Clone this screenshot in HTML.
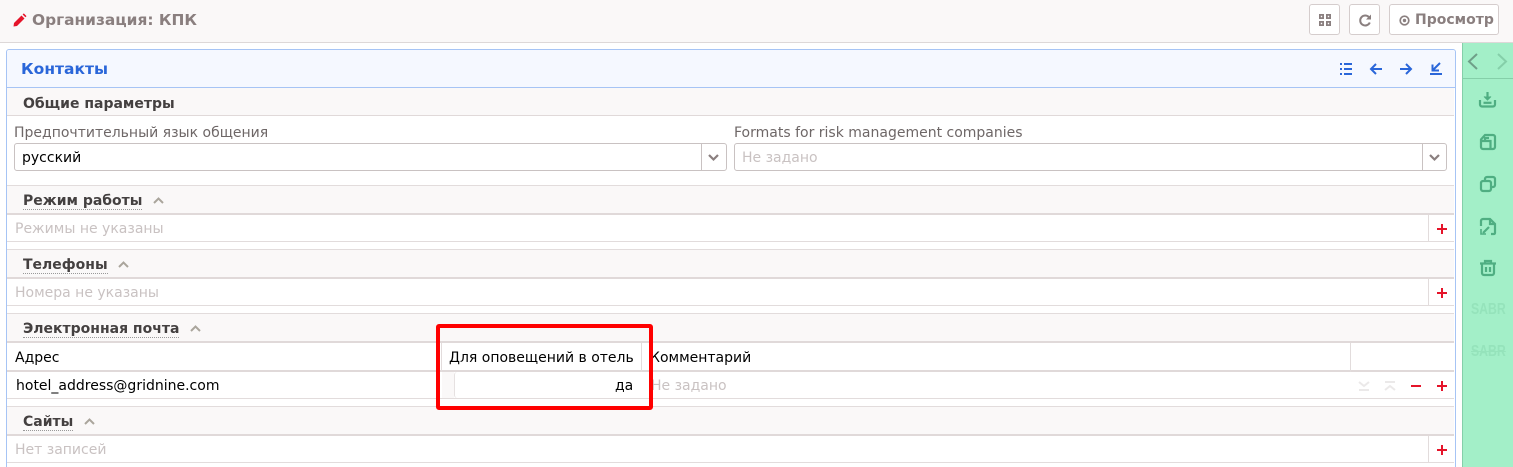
<!DOCTYPE html>
<html lang="ru"><head><meta charset="utf-8"><title>Организация: КПК</title>
<style>
html,body{margin:0;padding:0;width:1513px;height:467px;overflow:hidden;background:#fff}
body{position:relative;font-family:"DejaVu Sans","Liberation Sans",sans-serif;font-size:14px;color:#000}
.a{position:absolute;box-sizing:border-box}
.t{position:absolute;white-space:nowrap;line-height:16px}
.b{font-weight:700;color:#444040;font-size:14px}
.u{border-bottom:1px dotted #999}
.ph{color:#c9c2c2}
.sec{position:absolute;left:7px;width:1447px;background:#faf8f8;border-top:1px solid #e2dcdc;height:29px;border-bottom:2px solid #e0d9d9;box-sizing:border-box}
.row{position:absolute;left:7px;width:1447px;height:28px;background:#fff;border-bottom:1px solid #e2dcdc;box-sizing:border-box}
.v{position:absolute;width:1px;background:#e2dcdc}
.btn{position:absolute;top:4px;height:31px;background:#fff;border:1px solid #d5cdcd;border-radius:3px;box-sizing:border-box}
.inp{position:absolute;top:143px;height:28px;background:#fff;border:1px solid #c9c2c2;border-radius:3px;box-sizing:border-box}
.sabr{font-size:16px;font-weight:700;color:#95e3bb;font-family:'Liberation Sans',sans-serif;transform:scaleX(.766);transform-origin:left top}
svg{position:absolute;overflow:visible}
</style></head><body>

<!-- top bar -->
<div class="a" style="left:0;top:0;width:1513px;height:43px;background:#faf8f8;border-bottom:1px solid #ddd8d8"></div>
<svg style="left:13px;top:13px" width="14" height="14" viewBox="0 0 14 14"><path d="M.5 13.500 L1 10 L8.500 2.500 L11.500 5.500 L4 13Z" fill="#e5142a"/><path d="M9.600 1.500 L10.800 .4 L13.500 3.100 L12.400 4.300Z" fill="#e5142a"/></svg>
<div class="t" style="left:32px;top:12px;font-size:15.400px;font-weight:700;color:#8a7f7f">Организация: КПК</div>

<div class="btn" style="left:1309px;width:31px"></div>
<svg style="left:1319px;top:14px" width="12" height="12" viewBox="0 0 12 12" fill="#8a7f7f"><path d="M0 0h5v5H0zM1.800 1.800v1.400h1.400v-1.400zM7 0h5v5H7zM8.800 1.800v1.400h1.400v-1.400zM0 7h5v5H0zM1.800 8.800v1.400h1.400v-1.400zM7 7h5v5H7zM8.800 8.800v1.400h1.400v-1.400z" fill-rule="evenodd"/></svg>
<div class="btn" style="left:1349px;width:31px"></div>
<svg style="left:1359px;top:14px" width="13" height="13" viewBox="0 0 13 13" fill="none" stroke="#8a7f7f" stroke-width="2"><path d="M10.800 8.500A5 5 0 1 1 9.800 3"/><path d="M12 .5v5h-5z" fill="#8a7f7f" stroke="none"/></svg>
<div class="btn" style="left:1389px;width:110px"></div>
<svg style="left:1399px;top:15px" width="11" height="11" viewBox="0 0 11 11" fill="none" stroke="#8a7f7f" stroke-width="1.700"><circle cx="5.500" cy="5.500" r="4.300"/><circle cx="5.500" cy="5.500" r="1.700" fill="#8a7f7f" stroke="none"/></svg>
<div class="t" style="left:1415px;top:12px;font-size:14px;font-weight:700;color:#8a7f7f">Просмотр</div>

<!-- side bar -->
<div class="a" style="left:1462px;top:43px;width:51px;height:424px;background:#a3efc8;border-left:1px solid #85cfa9"></div>
<div class="a" style="left:1463px;top:78px;width:50px;height:1px;background:#85cfa9"></div>
<svg style="left:1467px;top:53px" width="11" height="17" viewBox="0 0 11 17" fill="none" stroke="#6f9f88" stroke-width="2"><path d="M10 1 L2 8.500 L10 16"/></svg>
<svg style="left:1497px;top:53px" width="11" height="17" viewBox="0 0 11 17" fill="none" stroke="#85cfa9" stroke-width="2"><path d="M1 1 L9 8.500 L1 16"/></svg>
<svg style="left:1479px;top:91px" width="17" height="17" viewBox="0 0 17 17" fill="none" stroke="#4fae82" stroke-width="2.200"><path d="M8.500 1v6"/><path d="M5 5.500 8.500 9 12 5.500" fill="#4fae82" stroke-width="1"/><path d="M1 9v4.500a2 2 0 0 0 2 2h11a2 2 0 0 0 2-2V9"/><path d="M4.500 11.800h8"/></svg>
<svg style="left:1480px;top:134px" width="16" height="16" viewBox="0 0 16 16" fill="none" stroke="#4fae82" stroke-width="2.200"><path d="M1 5.500 5 1h8a2 2 0 0 1 2 2v10a2 2 0 0 1-2 2H3a2 2 0 0 1-2-2z"/><path d="M1 7h9.500v8M5 7V4h4"/></svg>
<svg style="left:1480px;top:176px" width="16" height="16" viewBox="0 0 16 16" fill="none" stroke="#4fae82" stroke-width="2.200"><rect x="1" y="5" width="10" height="10" rx="2"/><path d="M5 4V3a2 2 0 0 1 2-2h6a2 2 0 0 1 2 2v6a2 2 0 0 1-2 2h-1"/></svg>
<svg style="left:1480px;top:218px" width="16" height="17" viewBox="0 0 16 17" fill="none" stroke="#4fae82" stroke-width="2.200"><path d="M1 8V3a2 2 0 0 1 2-2h7l5 5v9a1 1 0 0 1-1 1h-3"/><path d="M10 1v5h5"/><path d="M9 9 3 15"/><path d="M1 11v5h5" stroke-width="1.600"/></svg>
<svg style="left:1480px;top:260px" width="16" height="16" viewBox="0 0 16 16" fill="none" stroke="#4fae82" stroke-width="2.200"><path d="M0 3.500h16M5 3V1h6v2"/><path d="M2 4v9a2 2 0 0 0 2 2h8a2 2 0 0 0 2-2V4"/><path d="M6 7v5M10 7v5"/></svg>
<div class="t sabr" style="left:1471px;top:302px">SABR</div>
<div class="t sabr" style="left:1471px;top:344px;text-decoration:line-through">SABR</div>

<!-- main panel -->
<div class="a" style="left:6px;top:49px;width:1450px;height:430px;background:#fff;border:1px solid #a6c4f5;border-radius:3px 3px 0 0"></div>
<div class="a" style="left:7px;top:50px;width:1448px;height:38px;background:#f5f8ff;border-bottom:1px solid #a6c4f5;border-radius:3px 3px 0 0"></div>
<div class="t" style="left:21px;top:61px;font-size:15.500px;font-weight:700;color:#2a66d9">Контакты</div>
<svg style="left:1340px;top:63px" width="12" height="12" viewBox="0 0 12 12" fill="none" stroke="#2a66d9" stroke-width="2"><path d="M0 1h2M0 6h2M0 11h2M4 1h8M4 6h8M4 11h8"/></svg>
<svg style="left:1370px;top:63px" width="12" height="12" viewBox="0 0 12 12" fill="none" stroke="#2a66d9" stroke-width="2"><path d="M12 6H1M6 1 1 6l5 5"/></svg>
<svg style="left:1400px;top:63px" width="12" height="12" viewBox="0 0 12 12" fill="none" stroke="#2a66d9" stroke-width="2"><path d="M0 6h11M6 1l5 5-5 5"/></svg>
<svg style="left:1430px;top:62px" width="12" height="13" viewBox="0 0 12 13" fill="none" stroke="#2a66d9" stroke-width="2"><path d="M0 12h12M10 1 3 8M2.500 2.500V8.500H9"/></svg>

<div class="a" style="left:7px;top:88px;width:1447px;height:28px;background:#faf8f8;border-bottom:1px solid #e0d9d9"></div>
<div class="t b" style="left:23px;top:96px">Общие параметры</div>

<div class="t" style="left:14px;top:125px;color:#6e6767">Предпочтительный язык общения</div>
<div class="t" style="left:734px;top:125px;color:#6e6767">Formats for risk management companies</div>
<div class="inp" style="left:14px;width:713px"></div>
<div class="v" style="left:701px;top:144px;height:26px;background:#c9c2c2"></div>
<div class="t" style="left:22px;top:150px">русский</div>
<svg style="left:708px;top:154px" width="11" height="7" viewBox="0 0 11 7" fill="none" stroke="#8a7f7f" stroke-width="2.200"><path d="M1 1l4.500 4.500L10 1"/></svg>
<div class="inp" style="left:734px;width:713px"></div>
<div class="v" style="left:1422px;top:144px;height:26px;background:#c9c2c2"></div>
<div class="t ph" style="left:742px;top:150px">Не задано</div>
<svg style="left:1429px;top:154px" width="11" height="7" viewBox="0 0 11 7" fill="none" stroke="#8a7f7f" stroke-width="2.200"><path d="M1 1l4.500 4.500L10 1"/></svg>

<!-- Режим работы -->
<div class="sec" style="top:185px;height:30px"></div>
<div class="t b" style="left:23px;top:193px"><span class="u">Режим работы</span></div>
<svg style="left:153px;top:197px" width="11" height="7" viewBox="0 0 11 7" fill="none" stroke="#aaa59c" stroke-width="2"><path d="M1 6l4.500-4.500L10 6"/></svg>
<div class="row" style="top:215px;height:27px"></div>
<div class="v" style="left:1428px;top:215px;height:26px"></div>
<div class="t ph" style="left:15px;top:221px">Режимы не указаны</div>
<svg style="left:1437px;top:224px" width="10" height="10" viewBox="0 0 10 10" fill="none" stroke="#e5142a" stroke-width="2"><path d="M0 5h10M5 0v10"/></svg>

<!-- Телефоны -->
<div class="sec" style="top:249px;height:30px"></div>
<div class="t b" style="left:23px;top:257px"><span class="u">Телефоны</span></div>
<svg style="left:118px;top:261px" width="11" height="7" viewBox="0 0 11 7" fill="none" stroke="#aaa59c" stroke-width="2"><path d="M1 6l4.500-4.500L10 6"/></svg>
<div class="row" style="top:279px;height:27px"></div>
<div class="v" style="left:1428px;top:279px;height:26px"></div>
<div class="t ph" style="left:15px;top:285px">Номера не указаны</div>
<svg style="left:1437px;top:288px" width="10" height="10" viewBox="0 0 10 10" fill="none" stroke="#e5142a" stroke-width="2"><path d="M0 5h10M5 0v10"/></svg>

<!-- Электронная почта -->
<div class="sec" style="top:313px;height:30px"></div>
<div class="t b" style="left:23px;top:321px"><span class="u">Электронная почта</span></div>
<svg style="left:190px;top:325px" width="11" height="7" viewBox="0 0 11 7" fill="none" stroke="#aaa59c" stroke-width="2"><path d="M1 6l4.500-4.500L10 6"/></svg>
<div class="a" style="left:7px;top:343px;width:1447px;height:29px;background:#fff;border-bottom:2px solid #e0d9d9"></div>
<div class="t" style="left:15px;top:350px">Адрес</div>
<div class="t" style="left:449px;top:350px">Для оповещений в отель</div>
<div class="t" style="left:650px;top:350px">Комментарий</div>
<div class="v" style="left:441px;top:343px;height:55px"></div>
<div class="v" style="left:641px;top:343px;height:55px"></div>
<div class="v" style="left:1350px;top:343px;height:55px"></div>
<div class="row" style="top:372px;height:27px"></div>
<div class="a" style="left:442px;top:372px;width:12px;height:26px;background:#faf8f8"></div>
<div class="a" style="left:454px;top:372px;width:187px;height:26px;background:#fff;border-left:1px solid #e6e1e1;border-radius:3px"></div>
<div class="t" style="left:16px;top:378px">hotel_address@gridnine.com</div>
<div class="t" style="left:615px;top:378px">да</div>
<div class="t ph" style="left:651px;top:378px">Не задано</div>
<svg style="left:1359px;top:381px" width="10" height="10" viewBox="0 0 10 10" fill="none" stroke="#ebe9e9" stroke-width="2"><path d="M0 1l5 4 5-4M0 9h10"/></svg>
<svg style="left:1385px;top:381px" width="10" height="10" viewBox="0 0 10 10" fill="none" stroke="#ebe9e9" stroke-width="2"><path d="M0 1h10M0 9l5-4 5 4"/></svg>
<svg style="left:1411px;top:385px" width="10" height="2" viewBox="0 0 10 2"><path d="M0 0h10v2H0z" fill="#e5142a"/></svg>
<svg style="left:1437px;top:381px" width="10" height="10" viewBox="0 0 10 10" fill="none" stroke="#e5142a" stroke-width="2"><path d="M0 5h10M5 0v10"/></svg>

<!-- Сайты -->
<div class="sec" style="top:406px;height:30px"></div>
<div class="t b" style="left:23px;top:414px"><span class="u">Сайты</span></div>
<svg style="left:84px;top:418px" width="11" height="7" viewBox="0 0 11 7" fill="none" stroke="#aaa59c" stroke-width="2"><path d="M1 6l4.500-4.500L10 6"/></svg>
<div class="row" style="top:436px;height:27px"></div>
<div class="v" style="left:1428px;top:436px;height:26px"></div>
<div class="t ph" style="left:15px;top:442px">Нет записей</div>
<svg style="left:1437px;top:445px" width="10" height="10" viewBox="0 0 10 10" fill="none" stroke="#e5142a" stroke-width="2"><path d="M0 5h10M5 0v10"/></svg>

<!-- red highlight -->
<div class="a" style="left:436px;top:324px;width:217px;height:86px;border:4px solid #f00;border-radius:3px"></div>
</body></html>
